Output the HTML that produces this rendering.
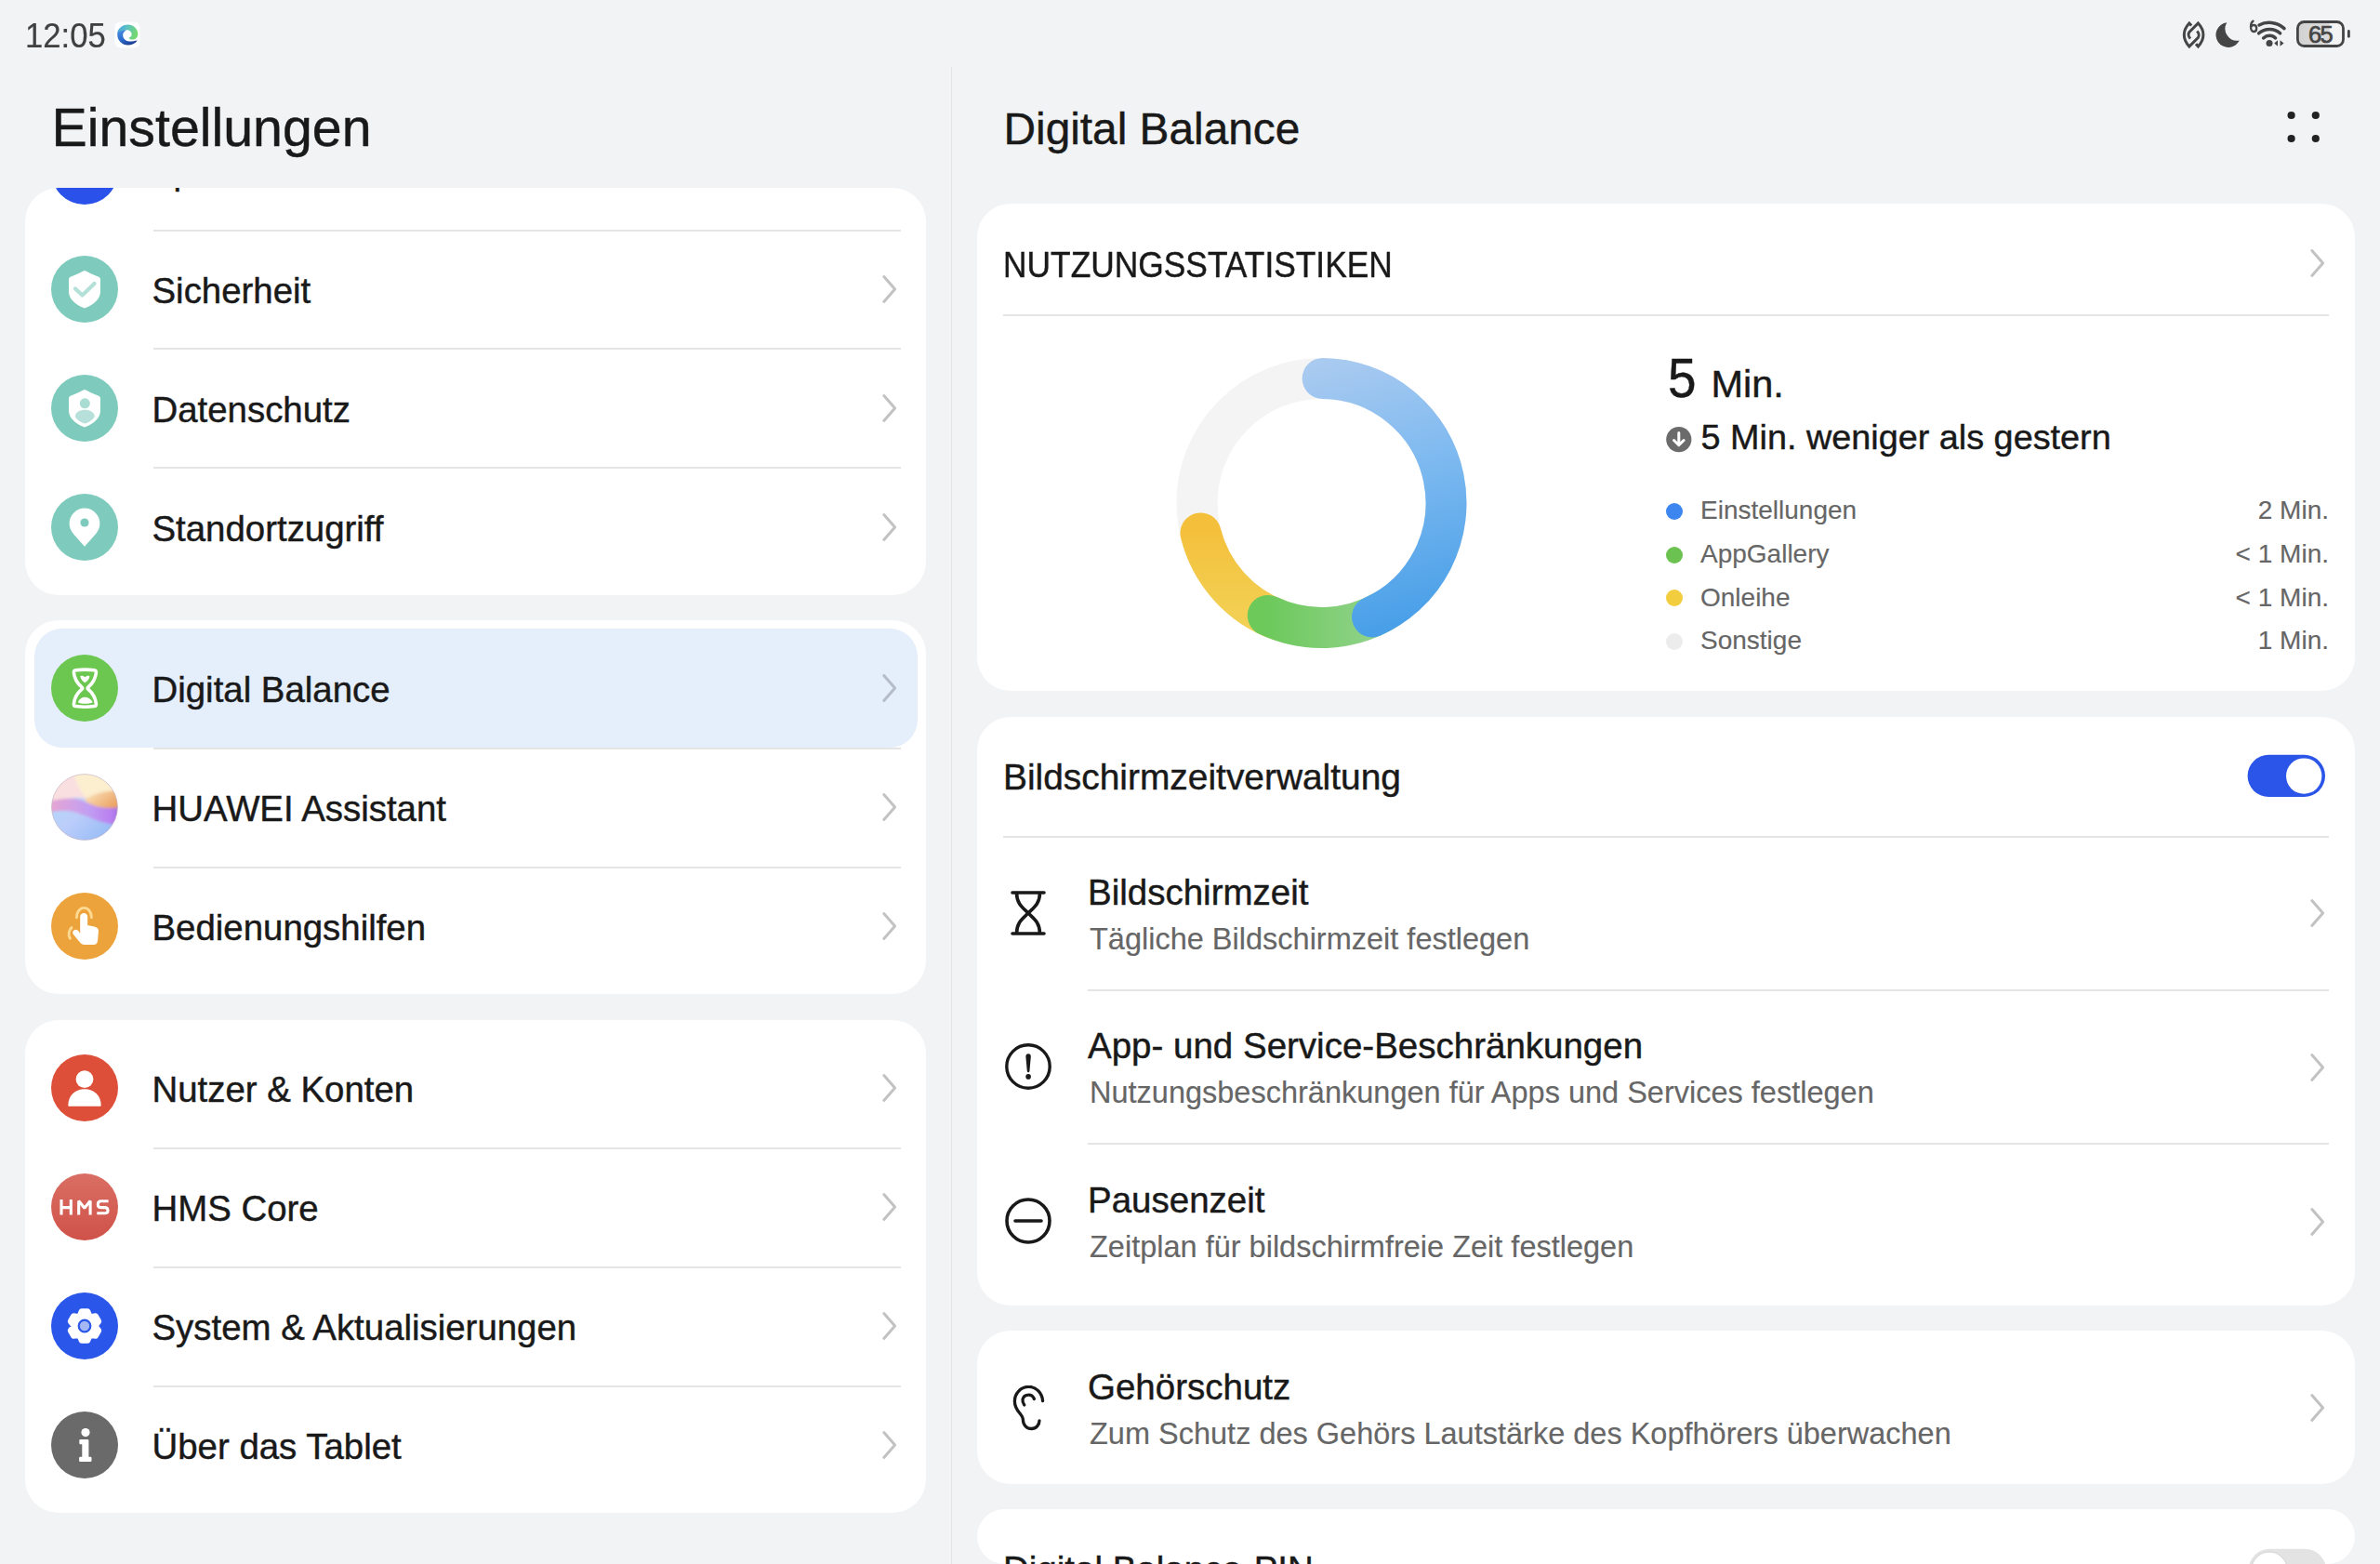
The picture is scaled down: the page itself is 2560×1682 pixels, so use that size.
<!DOCTYPE html>
<html><head><meta charset="utf-8"><title>Digital Balance</title>
<style>
html,body{margin:0;padding:0;}
body{width:2560px;height:1682px;background:#f1f3f5;position:relative;overflow:hidden;font-family:"Liberation Sans", sans-serif;}
.a{position:absolute;display:block;}
.t{position:absolute;white-space:nowrap;line-height:normal;font-family:"Liberation Sans", sans-serif;-webkit-text-stroke:0.45px currentColor;}
</style></head><body>
<div class="t" style="left:27.0px;top:17.5px;font-size:36.5px;color:#404040;transform:scaleX(0.95);transform-origin:0 0;-webkit-text-stroke:0.2px currentColor;">12:05</div>
<svg class="a" style="left:123px;top:23px;" width="28" height="29" viewBox="0 0 28 29"><rect x="0.5" y="0.5" width="27" height="28" rx="6" fill="#fdfeff"/>
<defs><linearGradient id="eg1" x1="0" y1="0" x2="0.6" y2="1"><stop offset="0" stop-color="#4f95e6"/><stop offset="0.55" stop-color="#2f6fcf"/><stop offset="1" stop-color="#1c3f94"/></linearGradient>
<linearGradient id="eg2" x1="0" y1="0" x2="1" y2="0.3"><stop offset="0" stop-color="#3f9fe0"/><stop offset="0.45" stop-color="#5ac0c8"/><stop offset="1" stop-color="#74d870"/></linearGradient></defs>
<path d="M24.8 20.4 C22.5 23.8 18.6 25.5 14.6 25.5 C8.3 25.5 3.2 20.4 3.2 14.2 C3.2 11.6 4 9.4 5.4 7.8 L13 9.6 C10.5 10.5 9.2 12.6 9.2 15 C9.2 18.6 12.3 21.4 16.2 21.4 C19.5 21.4 22.5 20.8 24.8 20.4 Z" fill="url(#eg1)"/>
<path d="M3.5 12.2 C4.8 6.6 9.4 3.4 14.6 3.4 C20.6 3.4 25.3 8 25.3 13.4 C25.3 17.4 22.4 19.6 19.3 19.6 C17.4 19.6 15.9 18.8 15.5 17.8 C17.4 17.2 18.6 15.8 18.6 14 C18.6 11.2 16.2 9.3 13.2 9.3 C9.3 9.3 6 10.8 3.5 12.2 Z" fill="url(#eg2)"/></svg>
<svg class="a" style="left:2340px;top:15px;" width="42" height="45" viewBox="0 0 42 45"><path d="M17.2 12.6 L14.8 10 C10.8 14.3 9.3 18.8 9.3 22.5 C9.3 26.2 10.8 30.7 14.8 35 L24.3 25.5 C25.6 23.8 25.4 20.8 23.2 18.5" fill="none" stroke="#454545" stroke-width="3" stroke-linejoin="miter"/>
<path d="M22 32.2 L24.4 35 C28.4 30.7 29.9 26.2 29.9 22.5 C29.9 18.8 28.4 14.3 24.4 10 L14.9 19.5 C13.6 21.2 13.8 24.2 16 26.5" fill="none" stroke="#454545" stroke-width="3" stroke-linejoin="miter"/></svg>
<svg class="a" style="left:2382px;top:15px;" width="30" height="45" viewBox="0 0 30 45"><path d="M13.3 9.2 A13.4 13.4 0 1 0 26.8 28.6 A13 13 0 0 1 13.3 9.2 Z" fill="#454545"/></svg>
<svg class="a" style="left:2415px;top:15px;" width="46" height="40" viewBox="0 0 46 40"><path d="M8.6 7.6 C7 8.6 6 10.8 6 13.6 C6 17.2 7.4 19 9.2 19 C11 19 12.2 17.4 12.2 15.4 C12.2 13.4 11 12 9.3 12 C7.8 12 6.5 13 6.1 14.3" fill="none" stroke="#454545" stroke-width="2.3" stroke-linecap="round"/>
<path d="M15 12 C23 7.6 34 8.5 42 15.6" fill="none" stroke="#454545" stroke-width="3.5" stroke-linecap="round"/>
<path d="M14.6 20.8 C21 15 31.5 15 37.6 20.8" fill="none" stroke="#454545" stroke-width="3.5" stroke-linecap="round"/>
<path d="M19.6 25.9 C23.3 22.4 29 22.4 32.6 25.9" fill="none" stroke="#454545" stroke-width="3.5" stroke-linecap="round"/>
<circle cx="26" cy="31.4" r="3.5" fill="#454545"/>
<path d="M31.2 31.5 L35 28.2 L35 34.8 Z M37.5 28.2 L41.6 31.5 L37.5 34.8 Z" fill="#454545"/></svg>
<svg class="a" style="left:2465px;top:15px;" width="66" height="45" viewBox="0 0 66 45"><defs><linearGradient id="batg" x1="0" y1="0" x2="1" y2="0"><stop offset="0" stop-color="#d2d2d2"/><stop offset="1" stop-color="#dcdcdc"/></linearGradient></defs>
<rect x="6.4" y="8.5" width="49.1" height="26" rx="7" fill="#f4f4f5"/>
<path d="M13.4 8.5 H40.8 V34.5 H13.4 A7 7 0 0 1 6.4 27.5 V15.5 A7 7 0 0 1 13.4 8.5 Z" fill="url(#batg)"/>
<rect x="6.4" y="8.5" width="49.1" height="26" rx="7" fill="none" stroke="#454545" stroke-width="2.8"/>
<rect x="60" y="17.1" width="2.8" height="8.6" rx="1.4" fill="#454545"/>
<text x="30.6" y="30.5" text-anchor="middle" font-family="Liberation Sans" font-size="25.5" fill="#454545" stroke="#454545" stroke-width="0.7" letter-spacing="-1.6">65</text></svg>
<div class="t" style="left:55.5px;top:103.6px;font-size:57.3px;color:#191919;">Einstellungen</div>
<div class="a" style="left:1023px;top:72px;width:1px;height:1610px;background:#e2e4e6;border-radius:0px;"></div>
<div class="a" style="left:27px;top:202px;width:969px;height:438px;background:#fff;border-radius:36px;overflow:hidden;"></div>
<div class="a" style="left:27px;top:202px;width:969px;height:438px;overflow:hidden;border-radius:36px;">
<svg class="a" style="left:28px;top:-54.5px" width="72" height="72" viewBox="0 0 72 72"><circle cx="36" cy="36" r="36" fill="#2a51ea"/></svg>
<div class="t" style="left:134px;top:-38.8px;font-size:38.4px;color:#191919;">Speicher</div>
</div>
<div class="a" style="left:165px;top:247px;width:804px;height:2px;background:#e5e5e5;border-radius:0px;height:1.5px;"></div>
<svg class="a" style="left:55px;top:274.5px;" width="72" height="72" viewBox="0 0 72 72"><circle cx="36" cy="36" r="36" fill="#7ecbbd"/><path d="M36 16.1 C37.2 16.1 44 20.4 50.6 22.5 C52.3 23.1 53 24.3 53 26 L53 38.5 C53 46.5 46 52.5 36 56.6 C26 52.5 19 46.5 19 38.5 L19 26 C19 24.3 19.7 23.1 21.4 22.5 C28 20.4 34.8 16.1 36 16.1 Z" fill="#fff"/>
<path d="M26 35.5 L33.5 42.5 L46.5 30" fill="none" stroke="#b3e0d7" stroke-width="4.2" stroke-linecap="round" stroke-linejoin="round"/></svg>
<div class="t" style="left:163.5px;top:290.5px;font-size:38.4px;color:#191919;">Sicherheit</div>
<svg class="a" style="left:946.5px;top:293.5px;" width="20" height="34" viewBox="0 0 20 34"><path d="M3.8 3.6 L15.6 17 L3.8 30.4" fill="none" stroke="#c2c2c2" stroke-width="3" stroke-linecap="round" stroke-linejoin="round"/></svg>
<div class="a" style="left:165px;top:374px;width:804px;height:2px;background:#e5e5e5;border-radius:0px;height:1.5px;"></div>
<svg class="a" style="left:55px;top:402.5px;" width="72" height="72" viewBox="0 0 72 72"><circle cx="36" cy="36" r="36" fill="#7ecbbd"/><path d="M36 16.1 C37.2 16.1 44 20.4 50.6 22.5 C52.3 23.1 53 24.3 53 26 L53 38.5 C53 46.5 46 52.5 36 56.6 C26 52.5 19 46.5 19 38.5 L19 26 C19 24.3 19.7 23.1 21.4 22.5 C28 20.4 34.8 16.1 36 16.1 Z" fill="#fff"/>
<circle cx="36.3" cy="30.8" r="5.5" fill="#a9dcd2"/>
<path d="M25.8 44.4 C26.5 40 31 37.7 36.3 37.7 C41.6 37.7 46.1 40 46.8 44.4 C46.8 46.5 41.2 51.4 36.3 52.5 C31.4 51.4 25.8 46.5 25.8 44.4 Z" fill="#b6e0d9"/></svg>
<div class="t" style="left:163.5px;top:418.5px;font-size:38.4px;color:#191919;">Datenschutz</div>
<svg class="a" style="left:946.5px;top:421.5px;" width="20" height="34" viewBox="0 0 20 34"><path d="M3.8 3.6 L15.6 17 L3.8 30.4" fill="none" stroke="#c2c2c2" stroke-width="3" stroke-linecap="round" stroke-linejoin="round"/></svg>
<div class="a" style="left:165px;top:502px;width:804px;height:2px;background:#e5e5e5;border-radius:0px;height:1.5px;"></div>
<svg class="a" style="left:55px;top:530.5px;" width="72" height="72" viewBox="0 0 72 72"><circle cx="36" cy="36" r="36" fill="#7ecbbd"/>
<path d="M36 56.8 L24.2 43.5 C21.3 40 19.6 36.3 19.6 32 A16.4 16.4 0 0 1 52.4 32 C52.4 36.3 50.7 40 47.8 43.5 Z" fill="#fff"/>
<circle cx="36" cy="31" r="4.6" fill="#7ecbbd"/></svg>
<div class="t" style="left:163.5px;top:546.5px;font-size:38.4px;color:#191919;">Standortzugriff</div>
<svg class="a" style="left:946.5px;top:549.5px;" width="20" height="34" viewBox="0 0 20 34"><path d="M3.8 3.6 L15.6 17 L3.8 30.4" fill="none" stroke="#c2c2c2" stroke-width="3" stroke-linecap="round" stroke-linejoin="round"/></svg>
<div class="a" style="left:27px;top:667px;width:969px;height:402px;background:#fff;border-radius:36px;overflow:hidden;"></div>
<div class="a" style="left:37px;top:676px;width:950px;height:128px;background:#e5eefb;border-radius:30px;"></div>
<svg class="a" style="left:55px;top:704.4px;" width="72" height="72" viewBox="0 0 72 72"><circle cx="36" cy="36" r="36" fill="#6bc74f"/>
<path d="M26.4 16.8 Q36.4 15.4 46.4 16.8 Q48.6 17.1 48.4 19.5 C47.6 27 44.5 31 40 34.8 Q38.2 36.2 40 37.4 C44.5 41.3 47.6 45.3 48.4 52.8 Q48.6 55.2 46.4 55.5 Q36.4 56.9 26.4 55.5 Q24.2 55.2 24.4 52.8 C25.2 45.3 28.3 41.3 32.8 37.4 Q34.6 36.2 32.8 34.8 C28.3 31 25.2 27 24.4 19.5 Q24.2 17.1 26.4 16.8 Z" fill="none" stroke="#fff" stroke-width="3.6" stroke-linejoin="round"/>
<path d="M31.3 23.3 C33.5 22.2 35 23.2 36.4 24.3 C37.8 23.2 39.3 22.2 41.5 23.3 C41 26.5 38.8 28.9 36.4 30.2 C34 28.9 31.8 26.5 31.3 23.3 Z" fill="#fff"/>
<path d="M28.8 51.2 C30.5 47.8 33 45.8 36.4 45.8 C39.8 45.8 42.3 47.8 44.9 51.2 C42.3 52.4 39.5 52.7 36.4 52.7 C33.3 52.7 30.8 52.4 28.8 51.2 Z" fill="#fff"/></svg>
<div class="t" style="left:163.5px;top:720.4px;font-size:38.4px;color:#191919;">Digital Balance</div>
<svg class="a" style="left:946.5px;top:723.4px;" width="20" height="34" viewBox="0 0 20 34"><path d="M3.8 3.6 L15.6 17 L3.8 30.4" fill="none" stroke="#b3bcc8" stroke-width="3" stroke-linecap="round" stroke-linejoin="round"/></svg>
<div class="a" style="left:165px;top:804px;width:804px;height:2px;background:#e5e5e5;border-radius:0px;height:1.5px;"></div>
<svg class="a" style="left:55px;top:832.3px;" width="72" height="72" viewBox="0 0 72 72"><defs>
<linearGradient id="asb" x1="0" y1="0" x2="1" y2="1"><stop offset="0" stop-color="#a8e2fa"/><stop offset="0.5" stop-color="#bccdfa"/><stop offset="1" stop-color="#86b4f4"/></linearGradient>
<linearGradient id="asp" x1="0" y1="0" x2="1" y2="0"><stop offset="0" stop-color="#eaa6cf"/><stop offset="0.55" stop-color="#c29ef2"/><stop offset="0.85" stop-color="#b97ff0"/><stop offset="1" stop-color="#9a6ae0"/></linearGradient>
<linearGradient id="asy" x1="0" y1="0" x2="1" y2="0.6"><stop offset="0" stop-color="#fde9c4"/><stop offset="1" stop-color="#ea9f5e"/></linearGradient>
<filter id="asf" x="-20%" y="-20%" width="140%" height="140%"><feGaussianBlur stdDeviation="1.6"/></filter>
<clipPath id="asc"><circle cx="36" cy="36" r="35.6"/></clipPath></defs>
<g clip-path="url(#asc)"><g filter="url(#asf)">
<rect x="-5" y="-5" width="82" height="82" fill="url(#asb)"/>
<path d="M-5 -5 H77 V34 C66 33 58 31 48 30 C40 29 34 25 26 26 C16 27 6 30 -5 31 Z" fill="#f9dfe0"/>
<path d="M22 -5 H77 V36 C68 34 58 33 50 32 C44 31 40 28 34 22 C30 16 26 6 22 -5 Z" fill="#fbefcf"/>
<path d="M36 28 C44 22 56 18 77 18 V38 C64 38 54 37 46 35 C41 33.5 38 31 36 28 Z" fill="url(#asy)"/>
<path d="M-5 30 C6 28 16 26 25 27 C34 28 40 32 48 35 C58 38 68 37 77 36 V56 C66 55 56 53 48 50 C36 45 26 40 14 40 C6 40 0 41 -5 43 Z" fill="url(#asp)"/>
</g></g>
<circle cx="36" cy="36" r="35.4" fill="none" stroke="#c9b7c9" stroke-width="1" opacity="0.7"/></svg>
<div class="t" style="left:163.5px;top:848.3px;font-size:38.4px;color:#191919;">HUAWEI Assistant</div>
<svg class="a" style="left:946.5px;top:851.3px;" width="20" height="34" viewBox="0 0 20 34"><path d="M3.8 3.6 L15.6 17 L3.8 30.4" fill="none" stroke="#c2c2c2" stroke-width="3" stroke-linecap="round" stroke-linejoin="round"/></svg>
<div class="a" style="left:165px;top:932px;width:804px;height:2px;background:#e5e5e5;border-radius:0px;height:1.5px;"></div>
<svg class="a" style="left:55px;top:960.3px;" width="72" height="72" viewBox="0 0 72 72"><circle cx="36" cy="36" r="36" fill="#eca33c"/>
<g transform="translate(-0.8,0)">
<path d="M32 44 V26 C32 23.5 34 22 36 22 C38 22 40 23.5 40 26 V35 L48 36.8 C50.5 37.4 52 39.3 51.8 41.8 L50.8 52 C50.5 54.5 49 56 46.5 56 H36.5 C34.5 56 33 55 31.8 53.5 L24.8 45 C23.5 43.5 23.8 41.5 25.3 40.5 C26.8 39.5 28.8 39.7 30 41 Z" fill="#fff"/>
<path d="M28.2 26.8 C28.2 20.6 31.8 16.4 36.2 16.4 C40.6 16.4 44.2 20.6 44.2 26.8" fill="none" stroke="#fdd991" stroke-width="2.9" stroke-linecap="round"/>
<path d="M22.8 37.6 C19.6 40.8 19 45.5 21.2 49.2" fill="none" stroke="#fdd991" stroke-width="2.9" stroke-linecap="round"/></g></svg>
<div class="t" style="left:163.5px;top:976.3px;font-size:38.4px;color:#191919;">Bedienungshilfen</div>
<svg class="a" style="left:946.5px;top:979.3px;" width="20" height="34" viewBox="0 0 20 34"><path d="M3.8 3.6 L15.6 17 L3.8 30.4" fill="none" stroke="#c2c2c2" stroke-width="3" stroke-linecap="round" stroke-linejoin="round"/></svg>
<div class="a" style="left:27px;top:1097px;width:969px;height:530px;background:#fff;border-radius:36px;overflow:hidden;"></div>
<svg class="a" style="left:55px;top:1134px;" width="72" height="72" viewBox="0 0 72 72"><circle cx="36" cy="36" r="36" fill="#dd4f39"/>
<circle cx="36" cy="26.7" r="9.4" fill="#fff"/>
<path d="M18.3 55 C18.3 44 26 37.3 36 37.3 C46 37.3 53.7 44 53.7 55 C53.7 55.5 53.3 55.8 52.8 55.8 H19.2 C18.7 55.8 18.3 55.5 18.3 55 Z" fill="#fff"/></svg>
<div class="t" style="left:163.5px;top:1150.0px;font-size:38.4px;color:#191919;">Nutzer &amp; Konten</div>
<svg class="a" style="left:946.5px;top:1153px;" width="20" height="34" viewBox="0 0 20 34"><path d="M3.8 3.6 L15.6 17 L3.8 30.4" fill="none" stroke="#c2c2c2" stroke-width="3" stroke-linecap="round" stroke-linejoin="round"/></svg>
<div class="a" style="left:165px;top:1234px;width:804px;height:2px;background:#e5e5e5;border-radius:0px;height:1.5px;"></div>
<svg class="a" style="left:55px;top:1261.8px;" width="72" height="72" viewBox="0 0 72 72"><defs><linearGradient id="hmsg" x1="0" y1="0" x2="0" y2="1"><stop offset="0" stop-color="#da6e64"/><stop offset="1" stop-color="#cf5249"/></linearGradient></defs>
<circle cx="36" cy="36" r="36" fill="url(#hmsg)"/>
<path d="M11 28 V44.4 M11 36.6 H21.3 M21.3 28 V44.4 M29.7 44.4 V29.4 L35.9 37.3 L42.1 29.4 V44.4" fill="none" stroke="#fff" stroke-width="3.1" stroke-linejoin="bevel"/><path d="M61.6 29.7 H53.6 Q50.4 29.7 50.4 32.8 V33.7 Q50.4 36.6 53.6 36.6 H57.8 Q61 36.6 61 39.8 V40.3 Q61 42.8 57.8 42.8 H49.3" fill="none" stroke="#fff" stroke-width="3.1" stroke-linejoin="round"/></svg>
<div class="t" style="left:163.5px;top:1277.8px;font-size:38.4px;color:#191919;">HMS Core</div>
<svg class="a" style="left:946.5px;top:1280.8px;" width="20" height="34" viewBox="0 0 20 34"><path d="M3.8 3.6 L15.6 17 L3.8 30.4" fill="none" stroke="#c2c2c2" stroke-width="3" stroke-linecap="round" stroke-linejoin="round"/></svg>
<div class="a" style="left:165px;top:1362px;width:804px;height:2px;background:#e5e5e5;border-radius:0px;height:1.5px;"></div>
<svg class="a" style="left:55px;top:1389.7px;" width="72" height="72" viewBox="0 0 72 72"><circle cx="36" cy="36" r="36" fill="#2a56e9"/>
<polygon points="30.30,26.13 32.67,20.35 39.33,20.35 41.70,26.13 41.70,26.13 47.89,25.29 51.22,31.06 47.40,36.00 47.40,36.00 51.22,40.94 47.89,46.71 41.70,45.87 41.70,45.87 39.33,51.65 32.67,51.65 30.30,45.87 30.30,45.87 24.11,46.71 20.78,40.94 24.60,36.00 24.60,36.00 20.78,31.06 24.11,25.29 30.30,26.13" fill="#fff" stroke="#fff" stroke-width="6" stroke-linejoin="round"/>
<circle cx="36" cy="36" r="6.3" fill="#a3b7f4" stroke="#2a56e9" stroke-width="2.2"/></svg>
<div class="t" style="left:163.5px;top:1405.7px;font-size:38.4px;color:#191919;">System &amp; Aktualisierungen</div>
<svg class="a" style="left:946.5px;top:1408.7px;" width="20" height="34" viewBox="0 0 20 34"><path d="M3.8 3.6 L15.6 17 L3.8 30.4" fill="none" stroke="#c2c2c2" stroke-width="3" stroke-linecap="round" stroke-linejoin="round"/></svg>
<div class="a" style="left:165px;top:1490px;width:804px;height:2px;background:#e5e5e5;border-radius:0px;height:1.5px;"></div>
<svg class="a" style="left:55px;top:1517.6px;" width="72" height="72" viewBox="0 0 72 72"><circle cx="36" cy="36" r="36" fill="#6a6a6a"/>
<circle cx="37" cy="22.6" r="4.6" fill="#fff"/>
<path d="M31.5 31.2 H39.2 V50 H42.3 V52.8 H31.3 V50 H34.5 V34 H31.5 Z" fill="#fff" stroke="#fff" stroke-width="2.4" stroke-linejoin="round"/></svg>
<div class="t" style="left:163.5px;top:1533.6px;font-size:38.4px;color:#191919;">Über das Tablet</div>
<svg class="a" style="left:946.5px;top:1536.6px;" width="20" height="34" viewBox="0 0 20 34"><path d="M3.8 3.6 L15.6 17 L3.8 30.4" fill="none" stroke="#c2c2c2" stroke-width="3" stroke-linecap="round" stroke-linejoin="round"/></svg>
<div class="t" style="left:1079.5px;top:110.9px;font-size:47.8px;color:#191919;">Digital Balance</div>
<svg class="a" style="left:2450px;top:110px;" width="56" height="54" viewBox="0 0 56 54"><circle cx="14.6" cy="14" r="4.1" fill="#222"/><circle cx="14.6" cy="39" r="4.1" fill="#222"/><circle cx="40.8" cy="14" r="4.1" fill="#222"/><circle cx="40.8" cy="39" r="4.1" fill="#222"/></svg>
<div class="a" style="left:1051px;top:219px;width:1482px;height:524px;background:#fff;border-radius:36px;overflow:hidden;"></div>
<div class="t" style="left:1078.5px;top:263.8px;font-size:38px;color:#191919;transform:scaleX(0.93);transform-origin:0 0;">NUTZUNGSSTATISTIKEN</div>
<svg class="a" style="left:2482.5px;top:266px;" width="20" height="34" viewBox="0 0 20 34"><path d="M3.8 3.6 L15.6 17 L3.8 30.4" fill="none" stroke="#c2c2c2" stroke-width="3" stroke-linecap="round" stroke-linejoin="round"/></svg>
<div class="a" style="left:1079px;top:338px;width:1426px;height:2px;background:#e5e5e5;border-radius:0px;height:1.5px;"></div>
<svg class="a" style="left:1200px;top:360px;" width="440" height="360" viewBox="0 0 440 360"><defs>
<linearGradient id="gb" gradientUnits="userSpaceOnUse" x1="221" y1="25" x2="300" y2="310"><stop offset="0" stop-color="#abcbf0"/><stop offset="0.45" stop-color="#7fbaf0"/><stop offset="1" stop-color="#4aa0e8"/></linearGradient>
<linearGradient id="gg" gradientUnits="userSpaceOnUse" x1="160" y1="0" x2="290" y2="0"><stop offset="0" stop-color="#6cc95a"/><stop offset="1" stop-color="#93d38e"/></linearGradient>
<linearGradient id="gy" gradientUnits="userSpaceOnUse" x1="0" y1="210" x2="0" y2="330"><stop offset="0" stop-color="#f4c03c"/><stop offset="1" stop-color="#f2d45a"/></linearGradient>
</defs>
<circle cx="221.5" cy="181" r="134" fill="none" stroke="#f4f4f4" stroke-width="44"/>
<path d="M175.67 306.92 A134 134 0 0 1 91.48 213.42" fill="none" stroke="url(#gy)" stroke-width="44" stroke-linecap="round"/>
<path d="M288.50 297.05 A134 134 0 0 1 163.81 301.95" fill="none" stroke="url(#gg)" stroke-width="44" stroke-linecap="round"/>
<path d="M222.67 47.01 A134 134 0 0 1 276.00 303.42" fill="none" stroke="url(#gb)" stroke-width="44" stroke-linecap="round"/></svg>
<div class="t" style="left:1793.5px;top:373.2px;font-size:59px;color:#191919;transform:scaleX(0.93);transform-origin:0 0;">5</div>
<div class="t" style="left:1840.5px;top:389.0px;font-size:41.5px;color:#191919;">Min.</div>
<svg class="a" style="left:1792px;top:459px;" width="28" height="28" viewBox="0 0 28 28"><circle cx="13.8" cy="13.6" r="13.6" fill="#6b6b6b"/><path d="M13.8 6.5 V19.5 M8.5 14.5 L13.8 19.8 L19.1 14.5" fill="none" stroke="#fff" stroke-width="3" stroke-linecap="round" stroke-linejoin="round"/></svg>
<div class="t" style="left:1829.5px;top:448.6px;font-size:37.8px;color:#191919;">5 Min. weniger als gestern</div>
<svg class="a" style="left:1792px;top:541px;" width="18" height="18" viewBox="0 0 18 18"><circle cx="9" cy="9" r="9" fill="#3d86f0"/></svg>
<div class="t" style="left:1829.0px;top:533.1px;font-size:28px;color:#666666;-webkit-text-stroke:0.15px currentColor;">Einstellungen</div>
<div class="t" style="right:55.0px;top:533.1px;font-size:28px;color:#666666;-webkit-text-stroke:0.15px currentColor;">2 Min.</div>
<svg class="a" style="left:1792px;top:588px;" width="18" height="18" viewBox="0 0 18 18"><circle cx="9" cy="9" r="9" fill="#6cc250"/></svg>
<div class="t" style="left:1829.0px;top:579.8px;font-size:28px;color:#666666;-webkit-text-stroke:0.15px currentColor;">AppGallery</div>
<div class="t" style="right:55.0px;top:579.8px;font-size:28px;color:#666666;-webkit-text-stroke:0.15px currentColor;">&lt; 1 Min.</div>
<svg class="a" style="left:1792px;top:634px;" width="18" height="18" viewBox="0 0 18 18"><circle cx="9" cy="9" r="9" fill="#f2cd3e"/></svg>
<div class="t" style="left:1829.0px;top:626.5px;font-size:28px;color:#666666;-webkit-text-stroke:0.15px currentColor;">Onleihe</div>
<div class="t" style="right:55.0px;top:626.5px;font-size:28px;color:#666666;-webkit-text-stroke:0.15px currentColor;">&lt; 1 Min.</div>
<svg class="a" style="left:1792px;top:681px;" width="18" height="18" viewBox="0 0 18 18"><circle cx="9" cy="9" r="9" fill="#ececec"/></svg>
<div class="t" style="left:1829.0px;top:673.2px;font-size:28px;color:#666666;-webkit-text-stroke:0.15px currentColor;">Sonstige</div>
<div class="t" style="right:55.0px;top:673.2px;font-size:28px;color:#666666;-webkit-text-stroke:0.15px currentColor;">1 Min.</div>
<div class="a" style="left:1051px;top:771px;width:1482px;height:633px;background:#fff;border-radius:36px;overflow:hidden;"></div>
<div class="t" style="left:1079.0px;top:813.5px;font-size:38.9px;color:#191919;">Bildschirmzeitverwaltung</div>
<svg class="a" style="left:2417px;top:811px;" width="85" height="47" viewBox="0 0 85 47"><rect x="0.6" y="0.8" width="83.4" height="45.2" rx="22.6" fill="#2a55e8"/><circle cx="61.2" cy="23.6" r="19.2" fill="#fff"/></svg>
<div class="a" style="left:1079px;top:899px;width:1426px;height:2px;background:#e5e5e5;border-radius:0px;height:1.5px;"></div>
<svg class="a" style="left:1087px;top:958px;" width="38" height="48" viewBox="0 0 38 48"><path d="M2 2 H36 M2 46 H36 M6.5 2 C6.5 14 13 18 19 24 C25 30 31.5 34 31.5 46 M31.5 2 C31.5 14 25 18 19 24 C13 30 6.5 34 6.5 46" fill="none" stroke="#191919" stroke-width="3.6" stroke-linecap="round"/></svg>
<div class="t" style="left:1170.0px;top:937.6px;font-size:38.5px;color:#191919;">Bildschirmzeit</div>
<div class="t" style="left:1172.0px;top:991.7px;font-size:32.5px;color:#666666;-webkit-text-stroke:0.15px currentColor;">Tägliche Bildschirmzeit festlegen</div>
<svg class="a" style="left:2482.5px;top:965.4px;" width="20" height="34" viewBox="0 0 20 34"><path d="M3.8 3.6 L15.6 17 L3.8 30.4" fill="none" stroke="#c2c2c2" stroke-width="3" stroke-linecap="round" stroke-linejoin="round"/></svg>
<div class="a" style="left:1170px;top:1064px;width:1335px;height:2px;background:#e5e5e5;border-radius:0px;height:1.5px;"></div>
<svg class="a" style="left:1081px;top:1122px;" width="50" height="50" viewBox="0 0 50 50"><circle cx="25" cy="25" r="23.2" fill="none" stroke="#191919" stroke-width="3.4"/><path d="M22.4 14.5 Q22.4 11.3 25.1 11.3 Q27.8 11.3 27.8 14.5 L26.4 30 Q26.2 31.2 25.1 31.2 Q24 31.2 23.8 30 Z" fill="#191919"/><circle cx="25.1" cy="35.9" r="2.8" fill="#191919"/></svg>
<div class="t" style="left:1170.0px;top:1103.0px;font-size:38.5px;color:#191919;">App- und Service-Beschränkungen</div>
<div class="t" style="left:1172.0px;top:1157.1px;font-size:32.5px;color:#666666;-webkit-text-stroke:0.15px currentColor;">Nutzungsbeschränkungen für Apps und Services festlegen</div>
<svg class="a" style="left:2482.5px;top:1130.8px;" width="20" height="34" viewBox="0 0 20 34"><path d="M3.8 3.6 L15.6 17 L3.8 30.4" fill="none" stroke="#c2c2c2" stroke-width="3" stroke-linecap="round" stroke-linejoin="round"/></svg>
<div class="a" style="left:1170px;top:1229px;width:1335px;height:2px;background:#e5e5e5;border-radius:0px;height:1.5px;"></div>
<svg class="a" style="left:1081px;top:1288px;" width="50" height="50" viewBox="0 0 50 50"><circle cx="25" cy="25" r="23" fill="none" stroke="#191919" stroke-width="3.6"/><path d="M11 25 H39" stroke="#191919" stroke-width="3.6" stroke-linecap="round"/></svg>
<div class="t" style="left:1170.0px;top:1269.2px;font-size:38.5px;color:#191919;">Pausenzeit</div>
<div class="t" style="left:1172.0px;top:1323.3px;font-size:32.5px;color:#666666;-webkit-text-stroke:0.15px currentColor;">Zeitplan für bildschirmfreie Zeit festlegen</div>
<svg class="a" style="left:2482.5px;top:1297px;" width="20" height="34" viewBox="0 0 20 34"><path d="M3.8 3.6 L15.6 17 L3.8 30.4" fill="none" stroke="#c2c2c2" stroke-width="3" stroke-linecap="round" stroke-linejoin="round"/></svg>
<div class="a" style="left:1051px;top:1431px;width:1482px;height:165px;background:#fff;border-radius:36px;overflow:hidden;"></div>
<svg class="a" style="left:1089px;top:1490px;" width="36" height="50" viewBox="0 0 36 50"><path d="M32.6 16.6 C32 8.5 25.8 1.4 17.6 1.4 C8.8 1.4 2.4 8.5 2.4 17 C2.4 22.5 5 26.5 8 30 C10 32.5 11.4 34 11.4 37 C11.4 42.5 15.5 46.5 20.5 46.5 C25.5 46.5 29 42.3 29 37.8" fill="none" stroke="#191919" stroke-width="3.3" stroke-linecap="round"/><path d="M12.8 21 C11 18.5 10.8 16.5 11 15 C11.7 12 14.5 10.2 17.6 10.2 C20 10.2 22.2 11.8 23.4 14.5" fill="none" stroke="#191919" stroke-width="3.3" stroke-linecap="round"/></svg>
<div class="t" style="left:1170.0px;top:1469.6px;font-size:38.5px;color:#191919;">Gehörschutz</div>
<div class="t" style="left:1172.0px;top:1523.7px;font-size:32.5px;color:#666666;-webkit-text-stroke:0.15px currentColor;">Zum Schutz des Gehörs Lautstärke des Kopfhörers überwachen</div>
<svg class="a" style="left:2482.5px;top:1497.4px;" width="20" height="34" viewBox="0 0 20 34"><path d="M3.8 3.6 L15.6 17 L3.8 30.4" fill="none" stroke="#c2c2c2" stroke-width="3" stroke-linecap="round" stroke-linejoin="round"/></svg>
<div class="a" style="left:1051px;top:1623px;width:1482px;height:59px;background:#fff;border-radius:30px;overflow:hidden;">
<div class="t" style="left:28px;top:42.7px;font-size:38.5px;color:#191919;">Digital Balance-PIN</div>
<svg class="a" style="left:1367px;top:42px" width="85" height="47" viewBox="0 0 85 47"><rect x="0.6" y="0.8" width="83.4" height="45.2" rx="22.6" fill="#e3e3e3"/><circle cx="23" cy="23.6" r="19.5" fill="#fff" stroke="#dcdcdc" stroke-width="1.5"/></svg>
</div>
</body></html>
